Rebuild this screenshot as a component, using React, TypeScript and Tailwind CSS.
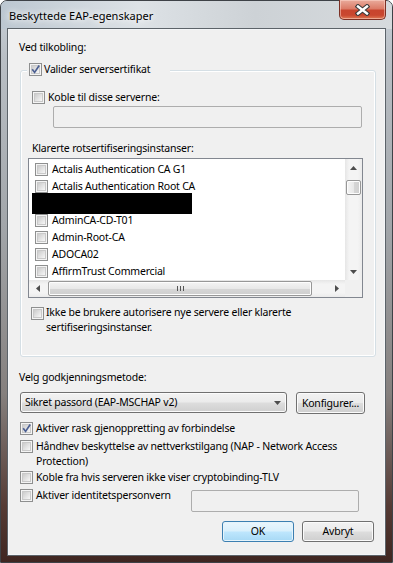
import React from "react";

const items = [
  "Actalis Authentication CA G1",
  "Actalis Authentication Root CA",
  null,
  "AdminCA-CD-T01",
  "Admin-Root-CA",
  "ADOCA02",
  "AffirmTrust Commercial",
];

function Box({ checked = false }: { checked?: boolean }) {
  return (
    <span className="relative flex h-[13px] w-[13px] shrink-0 items-center justify-center border border-[#8e8f8f] bg-[#f4f4f4]">
      <span className="h-[9px] w-[9px] border border-[#c9c9c9] bg-[linear-gradient(135deg,#cbcbcb,#f7f7f7)]" />
      {checked && (
        <svg className="absolute left-[0px] top-[0px]" width="11" height="11" viewBox="0 0 11 11">
          <path d="M2.2 5.2 L4.6 8.4 L9.2 1.6" fill="none" stroke="#4b5f92" strokeWidth="1.7" />
        </svg>
      )}
    </span>
  );
}

function Check({
  checked,
  children,
  className = "",
}: {
  checked?: boolean;
  children: React.ReactNode;
  className?: string;
}) {
  return (
    <div className={`flex items-start ${className}`}>
      <span className="mt-[1px]">
        <Box checked={checked} />
      </span>
      <span className="ml-[3px] whitespace-nowrap leading-[15px]">{children}</span>
    </div>
  );
}

function Tri({ dir }: { dir: "up" | "down" | "left" | "right" }) {
  const pts = {
    up: "0,4 7,4 3.5,0",
    down: "0,0 7,0 3.5,4",
    left: "4,0 4,7 0,3.5",
    right: "0,0 0,7 4,3.5",
  }[dir];
  const v = dir === "up" || dir === "down";
  return (
    <svg width={v ? 7 : 4} height={v ? 4 : 7} viewBox={v ? "0 0 7 4" : "0 0 4 7"}>
      <polygon points={pts} fill="#4d4d4d" />
    </svg>
  );
}

const btn =
  "flex items-center rounded-[3px] border border-[#707070] bg-[linear-gradient(180deg,#f2f2f2_0%,#ebebeb_48%,#dddddd_52%,#cfcfcf_100%)] shadow-[inset_0_0_0_1px_#fbfbfb]";

export default function App() {
  return (
    <div className="h-[563px] w-[393px] overflow-hidden bg-white font-['Noto_Sans',sans-serif] text-[10.5px] tracking-[-0.2px] text-black">
      <div className="flex h-full w-full flex-col rounded-t-[7px] border border-[#3e4247] bg-[linear-gradient(180deg,#c9d1d9_0%,#b9bfc5_10%,#a2a6aa_40%,#85807e_70%,#553b35_90%,#3f2621_100%)]">
        {/* title bar */}
        <div className="flex h-[28px] shrink-0 rounded-t-[6px] bg-[linear-gradient(90deg,#bcc7d1_0%,#dde2e6_35%,#cdd2d6_65%,#d6dadd_100%)]">
          <div className="flex-1 pl-[8px] pt-[7px] text-[11px] leading-[16px] tracking-[0px] text-black [text-shadow:0_0_6px_#fff,0_0_10px_#fff]">
            Beskyttede EAP-egenskaper
          </div>
          <div className="-mt-[1px] mr-[6px] flex h-[20px] w-[47px] items-center justify-center rounded-b-[5px] border border-t-0 border-[#7c3024] bg-[linear-gradient(180deg,#e9ab9c_0%,#dc7c68_45%,#c8452e_55%,#c9472f_80%,#de7a55_100%)] shadow-[inset_0_0_0_1px_rgba(255,220,210,0.5)]">
            <svg width="15" height="12" viewBox="0 0 15 12">
              <path d="M3 2.5 L12 9.5 M12 2.5 L3 9.5" stroke="#3a3a3a" strokeWidth="4.6" strokeLinecap="square" />
              <path d="M3 2.5 L12 9.5 M12 2.5 L3 9.5" stroke="#ffffff" strokeWidth="2.4" strokeLinecap="square" />
            </svg>
          </div>
        </div>

        {/* client area */}
        <div className="mx-[7px] mb-[7px] flex-1 border border-[#f4f6f8] bg-[#f0f0f0] shadow-[0_0_0_1px_#5c6369]">
          <div className="ml-[10px] mt-[10px] leading-[15px]">Ved tilkobling:</div>

          {/* group box */}
          <div className="ml-[11px] mt-[15px] w-[356px] rounded-[3px] border border-[#d5dfe5] pb-[21px] shadow-[inset_0_0_0_1px_#ffffff]">
            <div className="-mt-[9px] ml-[6px] w-[143px] bg-[#f0f0f0] px-[2px]">
              <div className="flex items-start">
                <span className="mt-[1px]">
                  <Box checked />
                </span>
                <span className="ml-[2px] leading-[15px]">Valider serversertifikat</span>
              </div>
            </div>

            <Check className="ml-[11px] mt-[13px]">Koble til disse serverne:</Check>
            <div className="ml-[32px] mt-[1px] h-[22px] w-[309px] rounded-[2px] border border-[#adadad] bg-[#f0f0f0]" />

            <div className="ml-[11px] mt-[13px] leading-[15px]">Klarerte rotsertifiseringsinstanser:</div>

            {/* list view */}
            <div className="ml-[7px] mt-[2px] flex h-[140px] w-[335px] flex-col border border-[#828790] bg-white">
              <div className="flex h-[121px]">
                <div className="flex-1 overflow-hidden pt-[2px]">
                  {items.map((it, i) =>
                    it === null ? (
                      <div key={i} className="-my-[2px] ml-[3px] h-[21px] w-[160px] bg-black" />
                    ) : (
                      <div key={i} className="flex h-[17px] items-center pl-[6px]">
                        <Box />
                        <span className="ml-[4px] whitespace-nowrap leading-[15px]">{it}</span>
                      </div>
                    )
                  )}
                </div>
                <div className="flex w-[17px] flex-col bg-[linear-gradient(90deg,#e6e6e6,#f4f4f4_25%,#f4f4f4_75%,#ebebeb)]">
                  <div className="flex h-[17px] items-center justify-center">
                    <Tri dir="up" />
                  </div>
                  <div className="flex-1">
                    <div className="ml-[1px] mt-[4px] h-[15px] w-[15px] rounded-[2px] border border-[#979797] bg-[linear-gradient(90deg,#f4f4f4_0%,#e8e8e8_50%,#d6d6d6_52%,#cfcfcf_100%)] shadow-[inset_0_0_0_1px_#fdfdfd]" />
                  </div>
                  <div className="flex h-[17px] items-center justify-center">
                    <Tri dir="down" />
                  </div>
                </div>
              </div>
              <div className="flex h-[17px]">
                <div className="flex flex-1 bg-[linear-gradient(180deg,#e6e6e6,#f4f4f4_25%,#f4f4f4_75%,#ebebeb)]">
                  <div className="flex w-[17px] items-center justify-center">
                    <Tri dir="left" />
                  </div>
                  <div className="flex-1 pt-[1px]">
                    <div className="ml-[2px] flex h-[15px] w-[264px] items-center justify-center rounded-[2px] border border-[#979797] bg-[linear-gradient(180deg,#f4f4f4_0%,#e8e8e8_50%,#d6d6d6_52%,#cfcfcf_100%)] shadow-[inset_0_0_0_1px_#fdfdfd]">
                      <svg width="7" height="5" viewBox="0 0 7 5">
                        <path d="M0.5 0 V5 M3.5 0 V5 M6.5 0 V5" stroke="#555" strokeWidth="1" />
                      </svg>
                    </div>
                  </div>
                  <div className="flex w-[17px] items-center justify-center">
                    <Tri dir="right" />
                  </div>
                </div>
                <div className="w-[17px] bg-[#f0f0f0]" />
              </div>
            </div>

            <div className="ml-[10px] mt-[7px] flex items-start">
              <span className="mt-[2px]">
                <Box />
              </span>
              <span className="ml-[2px] whitespace-nowrap leading-[15px]">
                Ikke be brukere autorisere nye servere eller klarerte
                <br />
                sertifiseringsinstanser.
              </span>
            </div>
          </div>

          <div className="ml-[10px] mt-[13px] leading-[15px]">Velg godkjenningsmetode:</div>

          <div className="ml-[11px] mt-[7px] flex items-start">
            <div className={`${btn} h-[21px] w-[267px] justify-between pl-[4px] pr-[5px]`}>
              <span className="leading-[15px]">Sikret passord (EAP-MSCHAP v2)</span>
              <Tri dir="down" />
            </div>
            <div className={`${btn} ml-[9px] h-[22px] w-[69px] justify-center`}>
              <span className="leading-[15px]">Konfigurer...</span>
            </div>
          </div>

          <Check checked className="ml-[11px] mt-[7px]">
            Aktiver rask gjenoppretting av forbindelse
          </Check>
          <Check className="ml-[11px] mt-[3px]">
            Håndhev beskyttelse av nettverkstilgang (NAP - Network Access
            <br />
            Protection)
          </Check>
          <Check className="ml-[11px] mt-[1px]">Koble fra hvis serveren ikke viser cryptobinding-TLV</Check>

          <div className="ml-[11px] mt-[3px] flex items-start">
            <Check className="w-[171px]">Aktiver identitetspersonvern</Check>
            <div className="mt-[2px] h-[22px] w-[168px] rounded-[2px] border border-[#adadad] bg-[#f0f0f0]" />
          </div>

          <div className="ml-[213px] mt-[9px] flex">
            <div className="flex h-[21px] w-[72px] items-center justify-center rounded-[3px] border border-[#3c7fb1] bg-[linear-gradient(180deg,#eaf6fd_0%,#d9f0fc_48%,#bee6fd_52%,#a7d9f5_100%)] shadow-[inset_0_0_0_1px_#e6f4fb]">
              <span className="leading-[15px]">OK</span>
            </div>
            <div className={`${btn} ml-[8px] h-[21px] w-[72px] justify-center`}>
              <span className="leading-[15px]">Avbryt</span>
            </div>
          </div>
        </div>
      </div>
    </div>
  );
}
